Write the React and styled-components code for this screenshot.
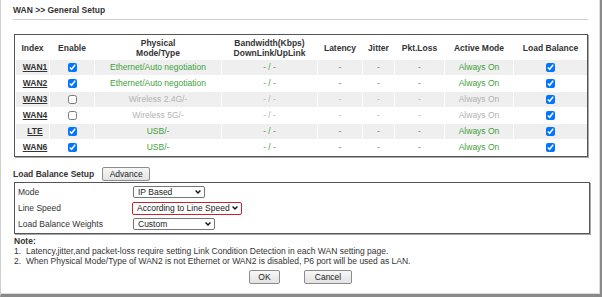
import React from 'react'
import styled, { createGlobalStyle } from 'styled-components'

const GlobalStyle = createGlobalStyle`
  html, body {
    margin: 0;
    padding: 0;
    background: #fff;
  }
  body {
    font-family: "Liberation Sans", Arial, sans-serif;
    font-size: 8.5px;
    color: #333;
  }
`

const GREEN = '#3f9f3a'
const GRAY = '#b3b3b3'

const Frame = styled.div`
  box-sizing: border-box;
  width: 602px;
  height: 297px;
  padding: 5px 0 0 12px;
  border-left: 1px solid #cfcfcf;
  border-right: 2px solid #8a8a8a;
  border-bottom: 3px solid #8a8a8a;
  box-shadow: inset -1px -1px 0 #dcdcdc;
  overflow: hidden;
`

const Title = styled.div`
  font-weight: bold;
  line-height: 10px;
  height: 10px;
`

const Rule = styled.div`
  margin-top: 4px;
  width: 575px;
  height: 1px;
  background: #cdcdcd;
`

const TableBox = styled.div`
  box-sizing: border-box;
  margin: 14px 0 0 1px;
  width: 574px;
  border: 1px solid #555;
  box-shadow: 1px 1px 0 #a8a8a8;
`

const Grid = styled.table`
  table-layout: fixed;
  width: 100%;
  border-collapse: separate;
  border-spacing: 1px;
  font-size: 8.5px;
`

const Th = styled.th`
  width: ${({ w }) => w}px;
  height: 23px;
  padding: 0;
  font-weight: bold;
  line-height: 10px;
  text-align: center;
  vertical-align: middle;
  color: #333;
`

const Tr = styled.tr`
  background: ${({ shaded }) => shaded ? '#efefef' : '#fff'};
`

const Td = styled.td`
  height: 15px;
  padding: 0;
  line-height: 15px;
  text-align: center;
  vertical-align: middle;
  white-space: nowrap;
  color: ${({ tone }) => tone === 'green' ? GREEN : tone === 'gray' ? GRAY : '#333'};
`

const IndexLink = styled.a`
  font-weight: bold;
  color: #333;
  text-decoration: underline;
  padding-left: 5px;
`

const Check = styled.input.attrs({ type: 'checkbox', readOnly: true })`
  width: 9px;
  height: 9px;
  margin: 0;
  vertical-align: middle;
  accent-color: #0075ff;
`

const SetupHead = styled.div`
  display: flex;
  align-items: center;
  gap: 8px;
  margin-top: 10px;
  height: 14px;
`

const Bold = styled.span`
  font-weight: bold;
`

const Button = styled.button`
  box-sizing: border-box;
  width: ${({ w }) => w}px;
  height: 14px;
  padding: 0;
  font-family: inherit;
  font-size: 8.5px;
  color: #222;
  background: linear-gradient(#f7f7f7, #e3e3e3);
  border: 1px solid #8c8c8c;
  border-radius: 2px;
`

const SetupBox = styled.div`
  box-sizing: border-box;
  margin: 1px 0 0 1px;
  width: 576px;
  height: 52px;
  padding: 1px 0 0 3px;
  border: 1px solid #555;
  box-shadow: 1px 1px 0 #a8a8a8;
`

const SetupRow = styled.div`
  display: grid;
  grid-template-columns: 114px auto;
  align-items: center;
  height: 16px;
`

const SelectBox = styled.div`
  box-sizing: border-box;
  display: flex;
  align-items: center;
  justify-content: space-between;
  width: ${({ w }) => w}px;
  height: ${({ h }) => h || 12}px;
  margin-left: ${({ shift }) => shift || 0}px;
  padding: 0 3px 0 4px;
  border: 1px solid ${({ alert }) => alert ? '#c8232c' : '#767676'};
  border-radius: 2px;
  color: #222;
  background: #fff;
`

const Chevron = () => (
  <svg width="6" height="4" viewBox="0 0 6 4">
    <path d="M0.6 0.6 L3 3 L5.4 0.6" fill="none" stroke="#111" strokeWidth="1.4" />
  </svg>
)

const Notes = styled.div`
  margin-top: 2px;
  line-height: 10px;
  padding-left: 1px;
`

const NoteItem = styled.div`
  display: flex;
`

const NoteNum = styled.span`
  width: 12px;
  flex: none;
`

const ButtonRow = styled.div`
  display: flex;
  justify-content: center;
  gap: 24px;
  margin-top: 4px;
  padding-right: 12px;
`

const columns = [
  ['Index', 33], ['Enable', 44], ['Physical Mode/Type', 126], ['Bandwidth(Kbps) DownLink/UpLink', 95],
  ['Latency', 44], ['Jitter', 31], ['Pkt.Loss', 49], ['Active Mode', 68], ['Load Balance', 73],
]

const wans = [
  { name: 'WAN1', on: true, mode: 'Ethernet/Auto negotiation' },
  { name: 'WAN2', on: true, mode: 'Ethernet/Auto negotiation' },
  { name: 'WAN3', on: false, mode: 'Wireless 2.4G/-' },
  { name: 'WAN4', on: false, mode: 'Wireless 5G/-' },
  { name: 'LTE', on: true, mode: 'USB/-' },
  { name: 'WAN6', on: true, mode: 'USB/-' },
]

const notes = [
  'Latency,jitter,and packet-loss require setting Link Condition Detection in each WAN setting page.',
  'When Physical Mode/Type of WAN2 is not Ethernet or WAN2 is disabled, P6 port will be used as LAN.',
]

const headerText = (label) => {
  if (label === 'Physical Mode/Type') return <>Physical<br />Mode/Type</>
  if (label.startsWith('Bandwidth')) return <>Bandwidth(Kbps)<br />DownLink/UpLink</>
  return label
}

export default function App() {
  return (
    <Frame>
      <GlobalStyle />
      <Title>WAN &gt;&gt; General Setup</Title>
      <Rule />

      <TableBox>
        <Grid>
          <thead>
            <tr>
              {columns.map(([label, w]) => (
                <Th key={label} w={w}>{headerText(label)}</Th>
              ))}
            </tr>
          </thead>
          <tbody>
            {wans.map((wan, i) => {
              const tone = wan.on ? 'green' : 'gray'
              return (
                <Tr key={wan.name} shaded={i % 2 === 0}>
                  <Td><IndexLink>{wan.name}</IndexLink></Td>
                  <Td><Check checked={wan.on} /></Td>
                  <Td tone={tone}>{wan.mode}</Td>
                  <Td tone={tone}>- / -</Td>
                  <Td tone={tone}>-</Td>
                  <Td tone={tone}>-</Td>
                  <Td tone={tone}>-</Td>
                  <Td tone={tone}>Always On</Td>
                  <Td><Check checked /></Td>
                </Tr>
              )
            })}
          </tbody>
        </Grid>
      </TableBox>

      <SetupHead>
        <Bold>Load Balance Setup</Bold>
        <Button w={48}>Advance</Button>
      </SetupHead>
      <SetupBox>
        <SetupRow>
          <span>Mode</span>
          <SelectBox w={72} shift={1}>IP Based<Chevron /></SelectBox>
        </SetupRow>
        <SetupRow>
          <span>Line Speed</span>
          <SelectBox w={110} h={13} alert>According to Line Speed<Chevron /></SelectBox>
        </SetupRow>
        <SetupRow>
          <span>Load Balance Weights</span>
          <SelectBox w={82} shift={1}>Custom<Chevron /></SelectBox>
        </SetupRow>
      </SetupBox>

      <Notes>
        <Bold>Note:</Bold>
        {notes.map((text, i) => (
          <NoteItem key={i}>
            <NoteNum>{i + 1}.</NoteNum>
            <span>{text}</span>
          </NoteItem>
        ))}
      </Notes>

      <ButtonRow>
        <Button w={31}>OK</Button>
        <Button w={48}>Cancel</Button>
      </ButtonRow>
    </Frame>
  )
}
